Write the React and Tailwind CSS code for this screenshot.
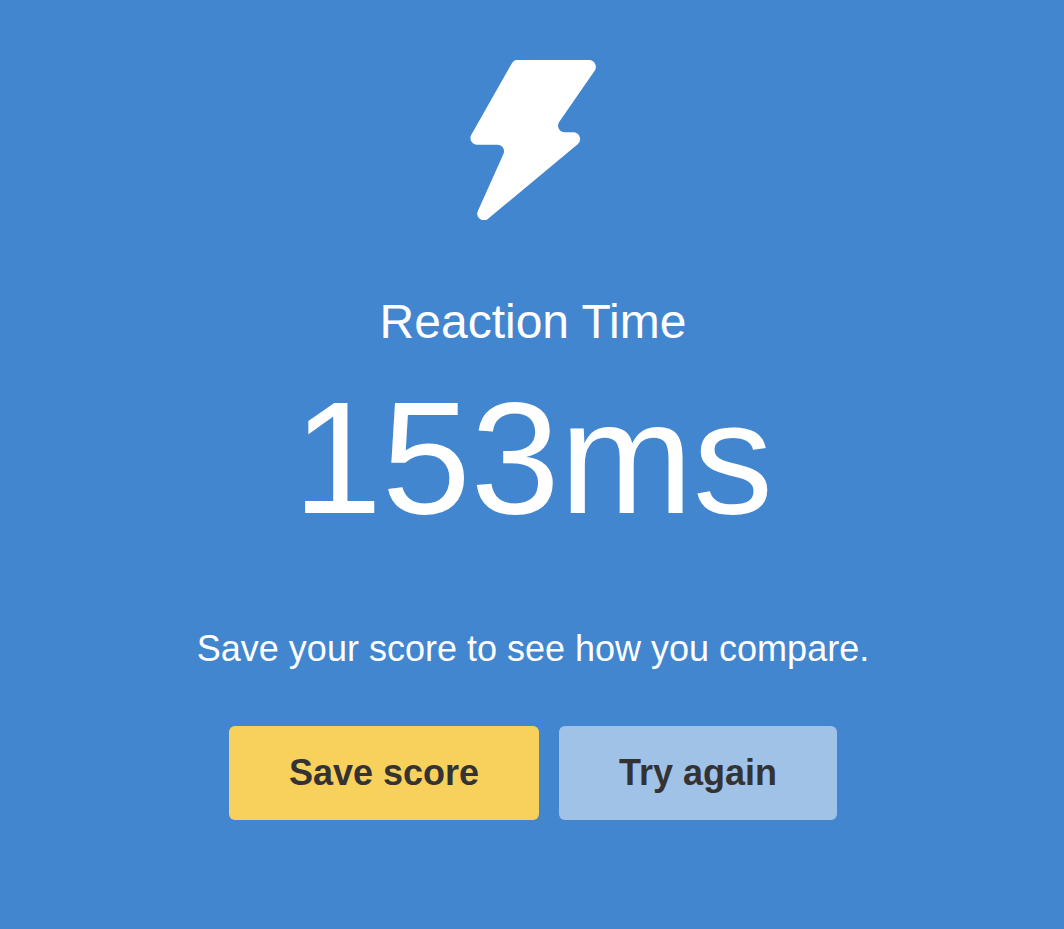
import React from "react";
import clsx from "clsx";

// ─── Icon ─────────────────────────────────────────────────────────────────────
const BoltIcon = ({ className }) => (
  <svg className={className} viewBox="30 30 378 480" fill="currentColor" aria-hidden="true">
    <path d="M174 30H387A20.500 20.500 0 0 1 404 62L299 214A20 20 0 0 0 315 247H340A20.500 20.500 0 0 1 353 283L86 505A20 20 0 0 1 54 482L130 313A20 20 0 0 0 112 284H51A20 20 0 0 1 34 254L155 41A20 20 0 0 1 174 30Z" />
  </svg>
);

// ─── Button ───────────────────────────────────────────────────────────────────
const variants = {
  primary: "bg-[#f8d15c] hover:bg-[#fada78]",
  secondary: "bg-[#a1c2e7] hover:bg-[#b3ceec]",
};

const Button = ({ variant = "primary", children }) => (
  <button
    type="button"
    className={clsx(
      "rounded-md px-[60px] py-5 text-4xl leading-[54px] font-bold text-[#333333] cursor-pointer",
      variants[variant]
    )}
  >
    {children}
  </button>
);

// ─── Result screen ────────────────────────────────────────────────────────────
export default function App() {
  return (
    <main className="min-h-screen flex flex-col items-center pl-[18px] pr-4 pt-[60px] pb-16 bg-[#4286cf] text-white text-center font-['Liberation_Sans',Arial,sans-serif]">
      <BoltIcon className="w-[126px] h-40" />
      <h1 className="mt-[66px] text-5xl leading-[72px]">Reaction Time</h1>
      <p className="text-[160px] leading-[200px]">153ms</p>
      <p className="mt-16 text-4xl leading-[54px]">
        Save your score to see how you compare.
      </p>
      <div className="mt-[50px] flex flex-wrap justify-center gap-5">
        <Button>Save score</Button>
        <Button variant="secondary">Try again</Button>
      </div>
    </main>
  );
}
